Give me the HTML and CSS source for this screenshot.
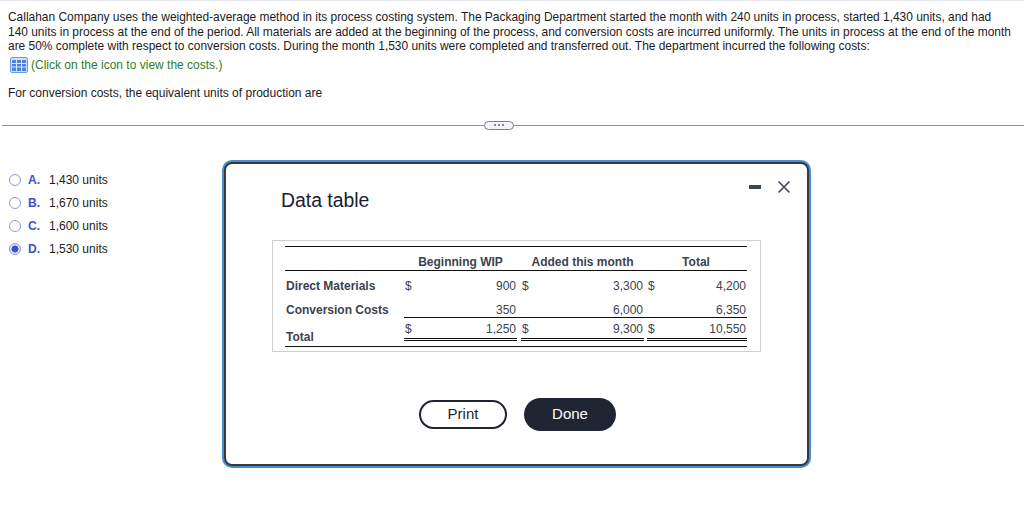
FILE: index.html
```html
<!DOCTYPE html>
<html lang="en">
<head>
<meta charset="utf-8">
<title>Process costing question</title>
<link rel="stylesheet" href="styles.css">
</head>
<body>
<section class="question">
  <p class="stem">Callahan Company uses the weighted-average method in its process costing system. The Packaging Department started the month with 240 units in process, started 1,430 units, and had 140 units in process at the end of the period. All materials are added at the beginning of the process, and conversion costs are incurred uniformly. The units in process at the end of the month are 50% complete with respect to conversion costs. During the month 1,530 units were completed and transferred out. The department incurred the following costs:</p>
  <p class="hint">
    <svg class="grid-icon" width="18" height="16" viewBox="0 0 18 16" aria-hidden="true">
      <rect x="0.5" y="0.5" width="17" height="15" rx="1.5" fill="#cfe0f8" stroke="#6a9ae4"/>
      <rect x="2" y="3" width="14" height="11" fill="#4a82e0"/>
      <path d="M2 6.500H16M2 10H16M6.500 3V14M11.500 3V14" stroke="#dbe7fb" stroke-width="1"/>
    </svg>
    <span>(Click on the icon to view the costs.)</span>
  </p>
  <p class="prompt">For conversion costs, the equivalent units of production are</p>
</section>
<div class="divider">
  <span class="more"><i></i><i></i><i></i></span>
</div>
<main class="lower">
  <ul class="options">
    <li class="option"><span class="radio"></span><b>A.</b><span>1,430 units</span></li>
    <li class="option"><span class="radio"></span><b>B.</b><span>1,670 units</span></li>
    <li class="option"><span class="radio"></span><b>C.</b><span>1,600 units</span></li>
    <li class="option"><span class="radio checked"></span><b>D.</b><span>1,530 units</span></li>
  </ul>
  <div class="modal">
    <div class="modal-head">
      <h1>Data table</h1>
      <div class="window-actions">
        <span class="minimize"></span>
        <svg width="14" height="14" viewBox="0 0 14 14" aria-hidden="true"><path d="M1.500 1.500L12.500 12.500M12.500 1.500L1.500 12.500" stroke="#3d4654" stroke-width="1.600" fill="none"/></svg>
      </div>
    </div>
    <div class="table-frame">
      <div class="data-table">
        <div class="row head-row">
          <span class="label"></span>
          <span class="cell center">Beginning WIP</span>
          <span class="cell center">Added this month</span>
          <span class="cell center total-head">Total</span>
        </div>
        <div class="row body-row">
          <span class="label">Direct Materials</span>
          <span class="cell"><span>$</span><span>900</span></span>
          <span class="cell"><span>$</span><span>3,300</span></span>
          <span class="cell"><span>$</span><span>4,200</span></span>
        </div>
        <div class="row second-row">
          <span class="label">Conversion Costs</span>
          <span class="cell end"><span>350</span></span>
          <span class="cell end"><span>6,000</span></span>
          <span class="cell end"><span>6,350</span></span>
        </div>
        <div class="row total-row">
          <span class="label">Total</span>
          <div class="totals">
            <span class="cell sum"><span>$</span><span>1,250</span></span>
            <span class="cell sum"><span>$</span><span>9,300</span></span>
            <span class="cell sum"><span>$</span><span>10,550</span></span>
          </div>
        </div>
      </div>
    </div>
    <div class="buttons">
      <button class="btn print" type="button">Print</button>
      <button class="btn done" type="button">Done</button>
    </div>
  </div>
</main>
</body>
</html>
```
FILE: styles.css
```css
* { box-sizing: border-box; }

html, body { margin: 0; padding: 0; }

body {
  width: 1024px;
  height: 508px;
  overflow: hidden;
  background: #fff;
  color: #1c1c1c;
  font-family: "Liberation Sans", Arial, sans-serif;
  font-size: 12px;
  border-top: 1px solid #e6e8ee;
}

p { margin: 0; }

.question { padding: 9px 8px 0 8px; }

.stem { line-height: 14.5px; font-size: 11.95px; max-width: 1006px; }

.hint {
  display: flex;
  align-items: center;
  gap: 3px;
  margin: 3px 0 0 2px;
  height: 16px;
  color: #2f7d1e;
}

.grid-icon { flex: none; }

.prompt { margin-top: 13px; line-height: 14px; }

.divider {
  position: relative;
  height: 1px;
  margin: 25px 0 0 2px;
  background: #8d949e;
}

.more {
  position: absolute;
  left: 482px;
  top: -4px;
  width: 30px;
  height: 9px;
  display: flex;
  align-items: center;
  justify-content: center;
  gap: 2px;
  border: 1px solid #78808c;
  border-radius: 5px;
  background: #f2f4f8;
}

.more i { width: 2px; height: 2px; border-radius: 50%; background: #5c6470; }

.lower {
  display: flex;
  align-items: flex-start;
  margin-top: 34px;
}

.options {
  list-style: none;
  width: 224px;
  margin: 9px 0 0 0;
  padding: 0 0 0 9px;
  flex: none;
}

.option {
  display: flex;
  align-items: center;
  height: 23px;
}

.radio {
  width: 12px;
  height: 12px;
  margin-right: 7px;
  border: 1.5px solid #8c9ae0;
  border-radius: 50%;
  flex: none;
  background: #fff;
}

.radio.checked {
  background: radial-gradient(circle, #3b50c8 0 3.2px, #dfe3f8 3.8px);
}

.option b {
  width: 21px;
  color: #3f52c6;
  font-weight: 700;
}

.modal {
  width: 585px;
  height: 304px;
  padding: 0 0 0 55px;
  background: #fff;
  border: 2px solid #36393e;
  border-radius: 8px;
  box-shadow: 0 0 0 2px #4a8fcb;
  margin: 2px 0 0 0;
  flex: none;
}

.modal-head {
  display: flex;
  justify-content: space-between;
  height: 76px;
  padding: 16px 16px 0 0;
}

.modal-head h1 {
  margin: 9px 0 0 0;
  font-size: 19.400px;
  font-weight: 400;
  line-height: 22px;
  color: #17202f;
}

.window-actions {
  display: flex;
  align-items: center;
  gap: 16px;
  height: 14px;
}

.minimize { width: 12px; height: 4px; background: #3d4654; }

.table-frame {
  width: 489px;
  height: 112px;
  margin-left: -9px;
  padding: 5px 13px 0 12px;
  border: 1px solid #cfcfcf;
}

.data-table {
  border-top: 1px solid #111;
  color: #3c4350;
}

.row { display: flex; }

.label { width: 119px; flex: none; padding-left: 1px; font-weight: 700; color: #3c4350; }

.cell {
  display: flex;
  justify-content: space-between;
  width: 113px;
  margin-right: 4px;
  padding: 0 1px 0 1px;
  flex: none;
}

.cell:nth-last-child(2) { width: 123px; margin-right: 3px; }

.cell:last-child { width: 100px; margin-right: 0; }

.center { justify-content: center; font-weight: 700; }

.total-head { padding-right: 3px; }

.end { justify-content: flex-end; }

.head-row {
  height: 24px;
  align-items: flex-end;
  padding-bottom: 1px;
  border-bottom: 1px solid #111;
}

.body-row { height: 27px; align-items: flex-end; padding-bottom: 5px; }

.second-row { height: 19px; align-items: flex-end; padding-bottom: 0; }

.total-row { height: 30px; border-bottom: 1px solid #111; }

.total-row .label { align-self: flex-end; padding-bottom: 2px; }

.totals { display: flex; flex: 1; border-top: 1px solid #111; padding-top: 4px; height: 24px; }

.sum {
  height: 19px;
  border-bottom: 3px double #111;
  flex: none;
}

.buttons {
  display: flex;
  align-items: center;
  gap: 17px;
  margin: 46px 0 0 138px;
}

.btn {
  font-family: "Liberation Sans", Arial, sans-serif;
  font-size: 15px;
  padding: 0 0 2px 0;
  border-radius: 17px;
}

.print {
  width: 88px;
  height: 29px;
  background: #fff;
  border: 2px solid #1f2430;
  color: #1f2430;
}

.done {
  width: 92px;
  height: 33px;
  background: #1f2533;
  border: 0;
  color: #fff;
}
```
